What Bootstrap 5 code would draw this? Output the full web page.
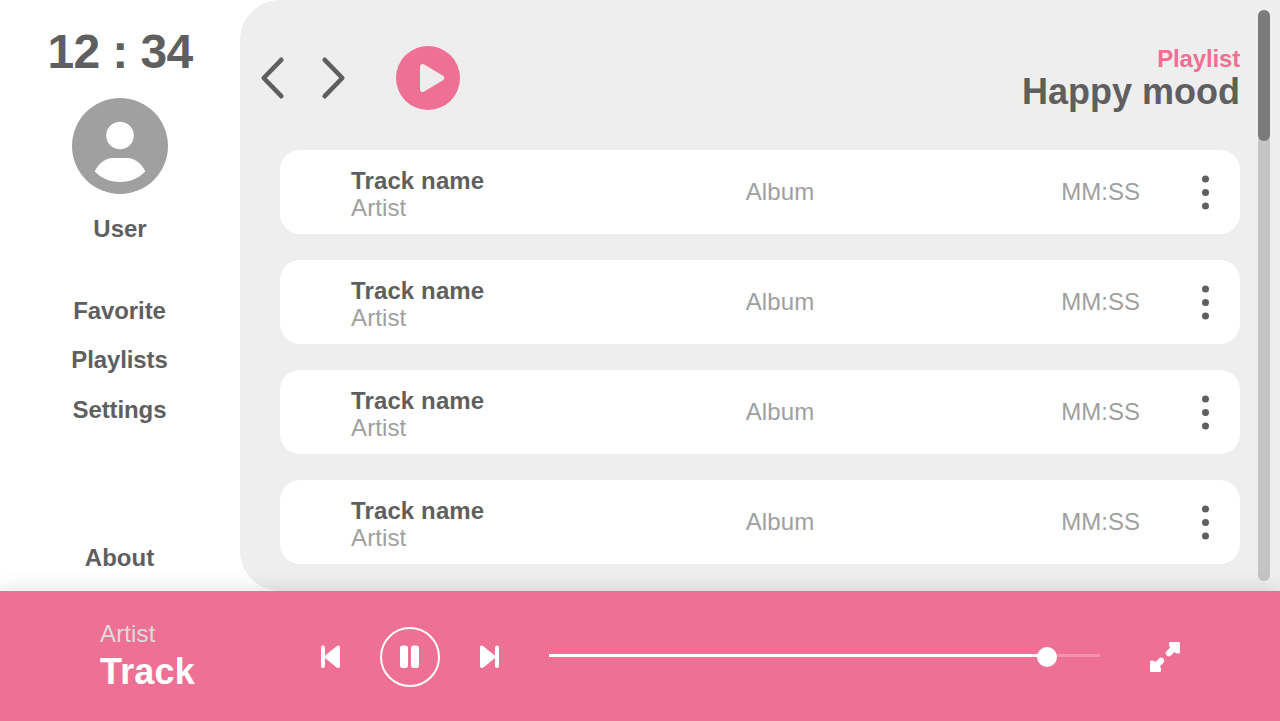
<!DOCTYPE html>
<html lang="en">
<head>
<meta charset="utf-8">
<meta name="viewport" content="width=device-width, initial-scale=1">
<title>Happy mood</title>
<link href="https://cdn.jsdelivr.net/npm/bootstrap@5.3.0/dist/css/bootstrap.min.css" rel="stylesheet">
<style>
  :root { --pink: #ee7094; --ink: #5f5f5f; --muted: #a0a0a0; --panel: #eeeeee; }
  body { font-family: "Liberation Sans", Arial, sans-serif; font-size: 24px; line-height: 27px; color: var(--ink); background: #fff; }
  svg { display: block; flex: none; }
  a, button { color: inherit; text-decoration: none; }
  button { background: none; border: 0; padding: 0; }
  .stage { height: 591px; }
  .sidebar { width: 240px; padding-top: 25px; }
  .clock { font-size: 48px; line-height: 54px; letter-spacing: -.6px; }
  .avatar { margin: 19px 0 21px; }
  .menu { margin-top: 55px; gap: 22.4px; letter-spacing: -.1px; padding-right: 1px; }
  .about { margin-bottom: 20px; padding-right: 1px; }
  .main-panel { background: var(--panel); border-radius: 40px 0 0 40px; }
  .content { padding: 45px 0 0 40px; width: 1000px; }
  .topbar { height: 105px; padding-top: 1px; }
  .navs { margin-left: -20px; }
  .navs .next { margin-left: 36px; }
  .navs .play { margin-left: 50px; }
  .list-title { margin-top: -1px; }
  .subtitle { color: var(--pink); line-height: 27px; letter-spacing: -.15px; }
  .headline { font-size: 36px; line-height: 40px; }
  .track-row { height: 84px; border-radius: 20px; background: #fff; margin-bottom: 26px; }
  .t-name { width: 394px; margin-left: 71px; padding-top: 4px; letter-spacing: .12px; }
  .t-album { width: 140px; text-align: center; margin-left: -35px; padding-bottom: 2px; letter-spacing: .1px; }
  .t-time { width: 140px; text-align: right; margin-left: 150px; padding-bottom: 2px; }
  .t-menu { margin-left: 61px; }
  .track-row .soft { color: var(--muted); }
  .scroll-track { width: 12px; height: 571px; margin: 10px 10px 0 0; border-radius: 6px; background: #c4c4c4; }
  .scroll-thumb { height: 131px; border-radius: 6px; background: #7b7b7b; }
  .player { position: relative; height: 130px; padding-top: 2px; background: var(--pink); color: #fff; box-shadow: 0 0 20px rgba(0,0,0,.14); }
  .now { width: 220px; margin-left: 100px; padding-top: 27px; letter-spacing: .15px; }
  .now .who { color: #dcdcdc; }
  .now .song { font-size: 36px; line-height: 46px; margin-top: 2px; }
  .seek { width: 551px; height: 20px; margin-left: 49px; position: relative; }
  .seek-rail { height: 3px; margin-top: -3px; width: 100%; background: rgba(255,255,255,.25); }
  .seek-fill { height: 3px; background: #fff; }
  .seek-knob { position: absolute; top: 0; width: 20px; height: 20px; margin-left: -10px; border-radius: 50%; background: #fff; }
</style>
</head>
<body class="overflow-hidden">
<div class="stage d-flex">
  <aside class="sidebar d-flex flex-column align-items-center fw-bold">
    <div class="clock">12 : 34</div>
    <svg class="avatar" width="96" height="96" viewBox="0 0 96 96">
      <circle cx="48" cy="48" r="48" fill="#a0a0a0"/>
      <circle cx="48" cy="37.500" r="13.800" fill="#fff"/>
      <path d="M22.700 73.500C27 64.500 34 60 41 60H55C62 60 69 64.500 73.300 73.500C67 80 58 84 48 84S29 80 22.700 73.500Z" fill="#fff"/>
    </svg>
    <div>User</div>
    <nav class="menu d-flex flex-column align-items-center">
      <a href="#">Favorite</a>
      <a href="#">Playlists</a>
      <a href="#">Settings</a>
    </nav>
    <a class="about mt-auto" href="#">About</a>
  </aside>

  <main class="main-panel flex-grow-1 d-flex justify-content-between">
    <div class="content">
      <header class="topbar d-flex justify-content-between align-items-start">
        <div class="navs d-flex align-items-center">
          <button aria-label="Back"><svg width="25" height="64" viewBox="0 0 25 64"><path d="M21.300 13.800 3.700 32 21.300 50.200" fill="none" stroke="#5f5f5f" stroke-width="4.600" stroke-linecap="round" stroke-linejoin="round"/></svg></button>
          <button class="next" aria-label="Forward"><svg width="25" height="64" viewBox="0 0 25 64"><path d="M3.700 13.800 21.300 32 3.700 50.200" fill="none" stroke="#5f5f5f" stroke-width="4.600" stroke-linecap="round" stroke-linejoin="round"/></svg></button>
          <button class="play" aria-label="Play"><svg width="64" height="64" viewBox="0 0 64 64"><circle cx="32" cy="32" r="32" fill="#ee7094"/><path d="M26.500 20.500 45.700 32 26.500 43.500Z" fill="#eee" stroke="#eee" stroke-width="5" stroke-linejoin="round"/></svg></button>
        </div>
        <div class="list-title text-end fw-bold">
          <div class="subtitle">Playlist</div>
          <div class="headline">Happy mood</div>
        </div>
      </header>
      <div id="tracks"></div>
    </div>
    <div class="scroll-track"><div class="scroll-thumb"></div></div>
  </main>
</div>

<footer class="player d-flex align-items-center">
  <div class="now align-self-start">
    <div class="who">Artist</div>
    <div class="song fw-bold">Track</div>
  </div>
  <svg width="180" height="60" viewBox="0 0 180 60" fill="#fff">
    <rect x="1" y="18.500" width="4" height="22.500" rx="2"/>
    <path d="M5.500 28.300 16.700 19.200C18.400 18 20 18.700 20 20.500V39C20 40.800 18.400 41.600 16.700 40.400L5.500 31.500C4.300 30.400 4.300 29.400 5.500 28.300Z"/>
    <circle cx="90" cy="30" r="29" fill="none" stroke="#fff" stroke-width="2"/>
    <rect x="80" y="18.500" width="8" height="22.500" rx="2.800"/>
    <rect x="91" y="18.500" width="8" height="22.500" rx="2.800"/>
    <path d="M174.500 28.300 163.300 19.200C161.600 18 160 18.700 160 20.500V39C160 40.800 161.600 41.600 163.300 40.400L174.500 31.500C175.700 30.400 175.700 29.400 174.500 28.300Z"/>
    <rect x="175" y="18.500" width="4" height="22.500" rx="2"/>
  </svg>
  <div class="seek d-flex align-items-center">
    <div class="seek-rail"><div class="seek-fill" style="width:90.4%"></div></div>
    <div class="seek-knob" style="left:90.4%"></div>
  </div>
  <svg class="ms-5" width="34" height="34" viewBox="-2 -2 34 34" fill="#fff" stroke="#fff" stroke-linejoin="round" stroke-linecap="round">
    <path d="M20.300 1.300H28.700V10.200L26.500 10 20.300 3.500Z" stroke-width="2.600"/><path d="M19 11.200 24.500 5.500" stroke-width="6.200"/>
    <path d="M9.700 28.700H1.300V19.800L3.500 20 9.700 26.500Z" stroke-width="2.600"/><path d="M11 18.800 5.500 24.500" stroke-width="6.200"/>
  </svg>
</footer>

<script src="https://cdn.jsdelivr.net/npm/bootstrap@5.3.0/dist/js/bootstrap.bundle.min.js"></script>
<script>
  const row = `
    <div class="track-row d-flex align-items-center">
      <div class="t-name"><div class="fw-bold">Track name</div><div class="soft">Artist</div></div>
      <div class="t-album soft">Album</div>
      <div class="t-time soft">MM:SS</div>
      <button class="t-menu" aria-label="More"><svg width="9" height="36" viewBox="0 0 9 36" fill="#5f5f5f"><circle cx="4.500" cy="5" r="3.500"/><circle cx="4.500" cy="18.500" r="3.500"/><circle cx="4.500" cy="32" r="3.500"/></svg></button>
    </div>`;
  document.getElementById('tracks').innerHTML = row.repeat(4);
</script>
</body>
</html>
